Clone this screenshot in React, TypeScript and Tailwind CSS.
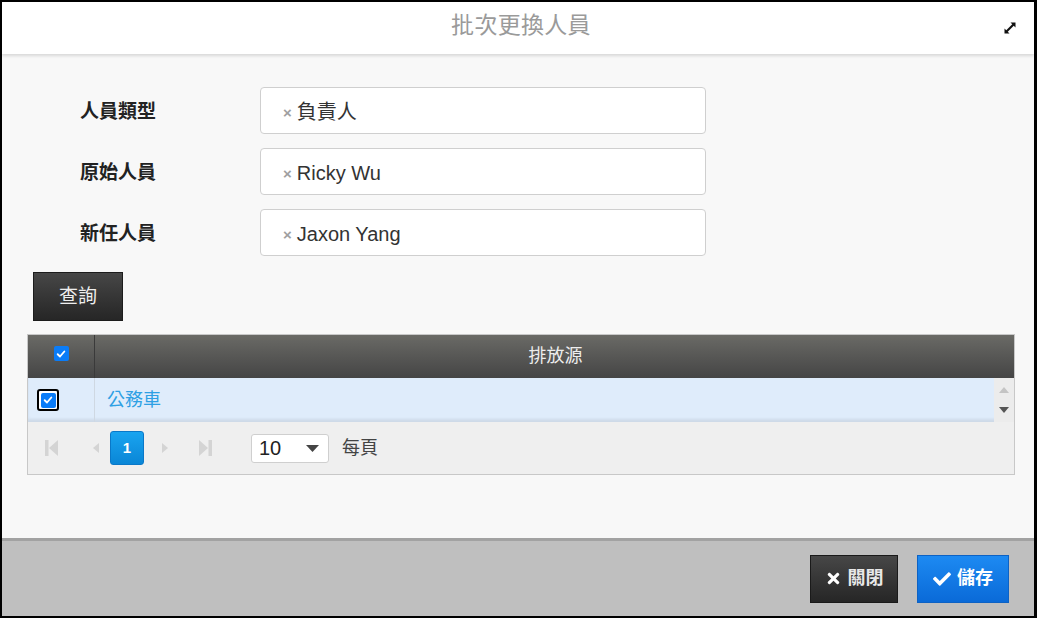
import { FaTimes, FaCheck } from "react-icons/fa";

const FONT = "font-['Liberation_Sans','Noto_Sans_CJK_TC',sans-serif]";

const fields = [
  { label: "人員類型", value: "負責人" },
  { label: "原始人員", value: "Ricky Wu" },
  { label: "新任人員", value: "Jaxon Yang" },
];

function ExpandIcon() {
  return (
    <svg width="16" height="16" viewBox="0 0 16 16">
      <path d="M4 12 L12 4" stroke="#111" strokeWidth="2.2" />
      <path d="M8.5 2.5 H13.5 V7.5 Z" fill="#111" />
      <path d="M2.5 8.5 V13.5 H7.5 Z" fill="#111" />
    </svg>
  );
}

function Check({ size = 10 }: { size?: number }) {
  return (
    <svg width={size} height={size} viewBox="0 0 12 12">
      <path d="M2 6.3 L4.8 9 L10 3" fill="none" stroke="#fff" strokeWidth="2.2" strokeLinecap="round" strokeLinejoin="round" />
    </svg>
  );
}

function PagerArrow({ kind }: { kind: "first" | "prev" | "next" | "last" }) {
  return (
    <svg width="18" height="20" viewBox="0 0 18 20">
      {kind === "first" && (
        <>
          <rect x="2" y="2" width="3.5" height="16" fill="#d4d4d4" />
          <path d="M15 2 V18 L6 10 Z" fill="#d4d4d4" />
        </>
      )}
      {kind === "prev" && <path d="M12 5 V15 L6 10 Z" fill="#d4d4d4" />}
      {kind === "next" && <path d="M6 5 V15 L12 10 Z" fill="#d4d4d4" />}
      {kind === "last" && (
        <>
          <path d="M3 2 V18 L12 10 Z" fill="#d4d4d4" />
          <rect x="12.5" y="2" width="3.5" height="16" fill="#d4d4d4" />
        </>
      )}
    </svg>
  );
}

export default function App() {
  return (
    <div className={`${FONT} flex h-[618px] w-[1037px] flex-col border-2 border-r-[3px] border-black bg-[#f8f8f8]`}>
      <header className="relative z-10 flex h-[52px] shrink-0 items-center justify-center bg-white pb-[5px] pl-[6px] shadow-[0_2px_3px_rgba(0,0,0,0.13)]">
        <span className="text-[23px] tracking-[0.3px] text-[#9a9a9a]">批次更換人員</span>
        <span className="absolute right-[16px] top-[18px]">
          <ExpandIcon />
        </span>
      </header>

      <main className="flex flex-1 flex-col pl-[25px] pr-[19px] pt-[33px]">
        <div className="flex flex-col gap-[14px] pl-[53px]">
          {fields.map((f) => (
            <div key={f.label} className="flex items-center">
              <label className="mt-[4px] w-[180px] text-[19px] font-bold text-[#222]">{f.label}</label>
              <div className="flex h-[47px] w-[446px] items-center rounded-[4px] border border-[#cfcfcf] bg-white pl-[22px] pt-[3px]">
                <span className="mr-[5px] mt-[3px] text-[15px] font-bold text-[#a0a0a0]">×</span>
                <span className="text-[20px] text-[#333]">{f.value}</span>
              </div>
            </div>
          ))}
        </div>

        <div className="mt-[16px] pl-[6px]">
          <button className="flex h-[49px] w-[90px] items-center justify-center border border-[#1c1c1c] bg-gradient-to-b from-[#474747] to-[#262626] pt-[2px] text-[19px] text-[#eee]">
            查詢
          </button>
        </div>

        <div className="mt-[13px] border border-[#c8c8c8]">
          <div className="flex h-[43px] bg-gradient-to-b from-[#6a6a66] to-[#454545]">
            <div className="flex w-[67px] items-center justify-center border-r border-[#3a3a3a]">
              <span className="mb-[6px] flex h-[15px] w-[15px] items-center justify-center rounded-[2px] bg-[#0a7cf8]">
                <Check />
              </span>
            </div>
            <div className="flex flex-1 items-center justify-center pl-[2px] text-[18px] text-[#eee]">排放源</div>
          </div>
          <div className="flex h-[44px] bg-[#dfecfb] shadow-[inset_0_-3px_3px_rgba(0,0,0,0.08)]">
            <div className="flex w-[67px] items-center border-r border-[#cfd8e2] pl-[9px]">
              <span className="flex h-[22px] w-[22px] items-center justify-center rounded-[3px] border-2 border-black bg-white">
                <span className="flex h-[15px] w-[15px] items-center justify-center rounded-[2px] bg-[#0a7cf8]">
                  <Check />
                </span>
              </span>
            </div>
            <div className="flex flex-1 items-center pl-[12px] text-[18px] text-[#2ea0e4]">公務車</div>
            <div className="flex w-[20px] flex-col items-center justify-between bg-[#ececec] py-[9px]">
              <svg width="10" height="6" viewBox="0 0 10 6"><path d="M0 6 L5 0 L10 6 Z" fill="#c4c4c4" /></svg>
              <svg width="10" height="6" viewBox="0 0 10 6"><path d="M0 0 L5 6 L10 0 Z" fill="#555" /></svg>
            </div>
          </div>
          <div className="flex h-[52px] items-center bg-[#efefef] pl-[15px]">
            <PagerArrow kind="first" />
            <span className="ml-[26px]"><PagerArrow kind="prev" /></span>
            <span className="ml-[5px] flex h-[34px] w-[34px] items-center justify-center rounded-[3px] border border-[#0a78c8] bg-gradient-to-b from-[#19a4f0] to-[#0a86d6] text-[15px] font-bold text-white">
              1
            </span>
            <span className="ml-[12px]"><PagerArrow kind="next" /></span>
            <span className="ml-[22px]"><PagerArrow kind="last" /></span>
            <div className="ml-[37px] flex h-[29px] w-[78px] items-center justify-between rounded-[3px] border border-[#cfcfcf] bg-white pl-[7px] pr-[9px]">
              <span className="text-[20px] text-[#222]">10</span>
              <svg width="13" height="7" viewBox="0 0 13 7"><path d="M0 0 L6.5 7 L13 0 Z" fill="#444" /></svg>
            </div>
            <span className="ml-[13px] text-[18px] text-[#444]">每頁</span>
          </div>
        </div>
      </main>

      <footer className="flex h-[78px] shrink-0 items-center justify-end gap-[19px] border-t-[3px] border-[#a2a2a2] bg-[#bfbfbf] pr-[25px]">
        <button className="flex h-[48px] w-[88px] items-center justify-center gap-[6px] border border-[#1a1a1a] bg-gradient-to-b from-[#474747] to-[#262626] text-[18px] font-bold text-[#e8e8e8]">
          <FaTimes className="h-[17px] w-[17px] text-white" />
          關閉
        </button>
        <button className="flex h-[48px] w-[92px] items-center justify-center gap-[6px] border border-[#0d62c4] bg-gradient-to-b from-[#1d8af2] to-[#0a6ad8] text-[18px] font-bold text-white">
          <FaCheck className="h-[18px] w-[18px]" />
          儲存
        </button>
      </footer>
    </div>
  );
}
